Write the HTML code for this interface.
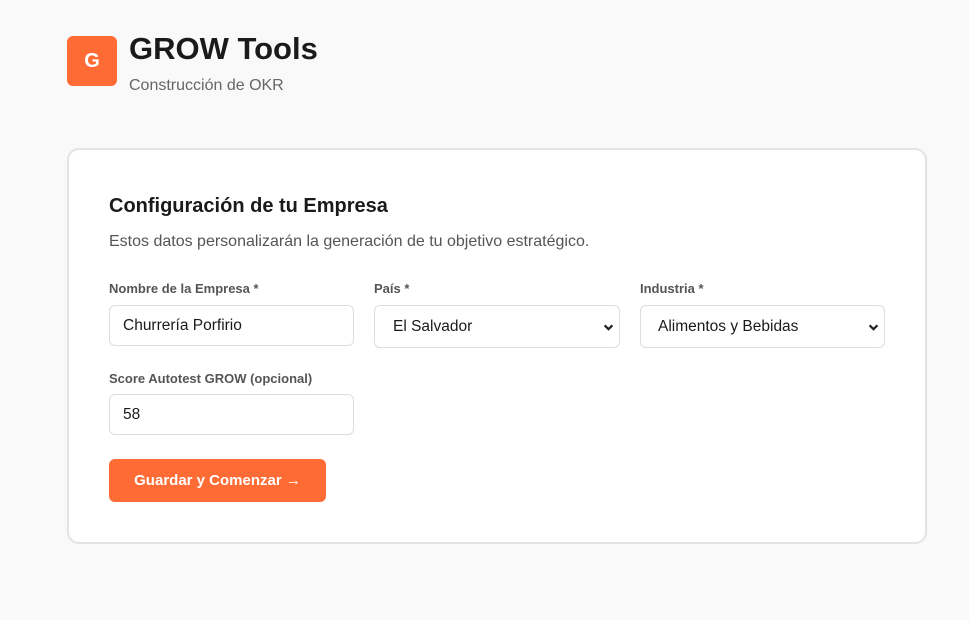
<!DOCTYPE html>
<html><head><meta charset="utf-8"><style>
*{box-sizing:border-box;margin:0;padding:0}
body{width:969px;height:620px;background:#f9f9f9;font-family:"Liberation Sans",sans-serif;position:relative;overflow:hidden;color:#1a1a1a}
.logo{position:absolute;left:67px;top:36px;width:50px;height:50px;border-radius:6px;background:#ff6b35;color:#fff;font-weight:bold;font-size:20px;display:flex;align-items:center;justify-content:center}
h1{position:absolute;left:129px;top:31px;font-size:31px;font-weight:bold;letter-spacing:0}
.sub{position:absolute;left:129px;top:77px;font-size:16px;color:#666}
.card{position:absolute;left:67px;top:148px;width:860px;height:396px;background:#fff;border:2px solid #e3e3e3;border-radius:12px}
.a{position:absolute}
h2{position:absolute;left:109px;top:195px;font-size:20px;font-weight:bold}
.desc{left:109px;top:233px;font-size:16px;color:#555}
.lbl{font-size:13px;font-weight:bold;color:#555}
.in{border:1px solid #ddd;border-radius:6px;background:#fff;font-size:15.5px;color:#1a1a1a;display:flex;align-items:center;padding-left:13px}
.chev{position:absolute;right:5px;top:16px;width:11px;height:11px}
.btn{left:109px;top:459px;width:217px;height:43px;background:#ff6b35;border-radius:6px;color:#fff;font-weight:bold;font-size:15px;display:flex;align-items:center;justify-content:center}
</style></head><body>
<div class="logo">G</div>
<h1>GROW Tools</h1>
<div class="sub">Construcción de OKR</div>
<div class="card"></div>
<h2>Configuración de tu Empresa</h2>
<div class="a desc">Estos datos personalizarán la generación de tu objetivo estratégico.</div>
<div class="a lbl" style="left:109px;top:281px">Nombre de la Empresa *</div>
<div class="a lbl" style="left:374px;top:281px">País *</div>
<div class="a lbl" style="left:640px;top:281px">Industria *</div>
<div class="a in" style="left:109px;top:305px;width:245px;height:41px">Churrería Porfirio</div>
<div class="a in" style="left:374px;top:305px;width:246px;height:43px;padding-left:18px">El Salvador<svg class="chev" viewBox="0 0 10 10"><path d="M1.5 3L5 6.5L8.5 3" stroke="#222" stroke-width="2" fill="none"/></svg></div>
<div class="a in" style="left:640px;top:305px;width:245px;height:43px;padding-left:17px">Alimentos y Bebidas<svg class="chev" viewBox="0 0 10 10"><path d="M1.5 3L5 6.5L8.5 3" stroke="#222" stroke-width="2" fill="none"/></svg></div>
<div class="a lbl" style="left:109px;top:371px">Score Autotest GROW (opcional)</div>
<div class="a in" style="left:109px;top:394px;width:245px;height:41px">58</div>
<div class="a btn">Guardar y Comenzar →</div>
</body></html>
